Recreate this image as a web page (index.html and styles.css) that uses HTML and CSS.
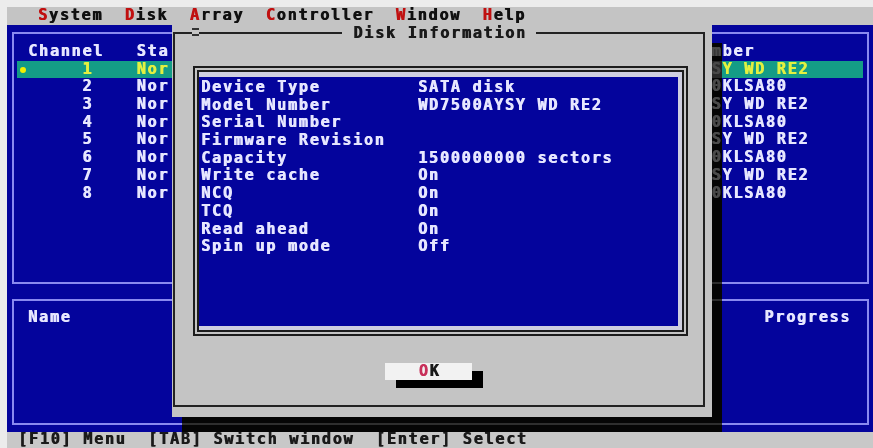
FILE: index.html
```html
<!DOCTYPE html>
<html>
<head>
<meta charset="utf-8">
<title>Disk Information</title>
<link rel="stylesheet" href="styles.css">
</head>
<body>
<div class="screen">
  <div class="menubar"><span class="hk">S</span>ystem  <span class="hk">D</span>isk  <span class="hk">A</span>rray  <span class="hk">C</span>ontroller  <span class="hk">W</span>indow  <span class="hk">H</span>elp</div>
  <div class="main">
    <div class="panel panel-top">
      <div class="row head"><span>Channel</span><span>Sta</span><span>mber</span></div>
      <div class="row sel"><span class="dot"></span><span class="num">1</span><span>Nor</span><span>SY WD RE2</span></div>
      <div class="row"><span class="num">2</span><span>Nor</span><span>0KLSA80</span></div>
      <div class="row"><span class="num">3</span><span>Nor</span><span>SY WD RE2</span></div>
      <div class="row"><span class="num">4</span><span>Nor</span><span>0KLSA80</span></div>
      <div class="row"><span class="num">5</span><span>Nor</span><span>SY WD RE2</span></div>
      <div class="row"><span class="num">6</span><span>Nor</span><span>0KLSA80</span></div>
      <div class="row"><span class="num">7</span><span>Nor</span><span>SY WD RE2</span></div>
      <div class="row"><span class="num">8</span><span>Nor</span><span>0KLSA80</span></div>
    </div>
    <div class="panel panel-bottom">
      <span>Name</span><span>Progress</span>
    </div>
  </div>
  <div class="status">[F10] Menu  [TAB] Switch window  [Enter] Select</div>

  <div class="shadow"></div>

  <div class="dialog">
    <div class="frame">
      <span class="sysmenu"></span>
      <div class="title"><span>Disk Information</span></div>
      <div class="box-outer">
        <div class="box-inner">
          <div class="info">
            <div class="info-row"><span>Device Type</span><span>SATA disk</span></div>
            <div class="info-row"><span>Model Number</span><span>WD7500AYSY WD RE2</span></div>
            <div class="info-row"><span>Serial Number</span><span></span></div>
            <div class="info-row"><span>Firmware Revision</span><span></span></div>
            <div class="info-row"><span>Capacity</span><span>1500000000 sectors</span></div>
            <div class="info-row"><span>Write cache</span><span>On</span></div>
            <div class="info-row"><span>NCQ</span><span>On</span></div>
            <div class="info-row"><span>TCQ</span><span>On</span></div>
            <div class="info-row"><span>Read ahead</span><span>On</span></div>
            <div class="info-row"><span>Spin up mode</span><span>Off</span></div>
          </div>
        </div>
      </div>
      <div class="ok"><span class="ok-hk">O</span>K</div>
    </div>
  </div>
</div>
</body>
</html>
```

FILE: styles.css
```css
* { box-sizing: border-box; }
:root { --cw: 10.85px; }
html, body { margin: 0; padding: 0; }
body {
  background: #ececec;
  width: 873px;
  height: 448px;
  overflow: hidden;
  padding: 7px 0 0 7px;
  font-family: "DejaVu Sans Mono", "Liberation Mono", monospace;
  font-weight: bold;
  font-size: 15.2px;
  letter-spacing: 1.7px;
  text-shadow: 0.7px 0 0 currentColor;
}
.screen {
  position: relative;
  width: 866px;
  height: 441px;
}
.menubar {
  height: 18px;
  background: #c4c4c4;
  color: #101010;
  line-height: 17px;
  padding-left: 31px;
  white-space: pre;
}
.hk { color: #c01010; }

.main {
  height: 407px;
  background: #04049c;
  padding: 7px 4px 7px 5px;
  display: flex;
  flex-direction: column;
  gap: 15px;
}
.panel { border: 2px solid #8a8af0; }
.panel-top {
  height: 252px;
  padding-top: 9px;
}
.panel-bottom {
  height: 126px;
  padding: 8px 16px 0 14px;
  display: flex;
  justify-content: space-between;
  align-items: flex-start;
  line-height: 17.7px;
  color: #e6e6ff;
}
.row {
  position: relative;
  display: grid;
  grid-template-columns: calc(var(--cw) * 10) calc(var(--cw) * 53) 1fr;
  height: 17.7px;
  line-height: 17.7px;
  margin: 0 4px 0 3px;
  padding-left: 11px;
  color: #e6e6ff;
  white-space: pre;
}
.row.sel {
  background: #149c86;
  color: #e4f040;
}
.num { padding-left: calc(var(--cw) * 5); }
.dot {
  position: absolute;
  left: 3px;
  top: 6px;
  width: 6px;
  height: 6px;
  border-radius: 50%;
  background: #f4f000;
}

.status {
  height: 16px;
  background: #c8c8c8;
  color: #1a1a1a;
  line-height: 14px;
  padding-left: 11px;
  white-space: pre;
}

.shadow {
  position: absolute;
  left: 175px;
  top: 36px;
  width: 540px;
  height: 389px;
  background: rgba(0, 0, 0, 0.15);
  backdrop-filter: grayscale(1) brightness(0.38);
}

.dialog {
  position: absolute;
  left: 165px;
  top: 18px;
  width: 540px;
  height: 392px;
  background: #c4c4c4;
  padding: 7px 0 0 1px;
}
.frame {
  position: relative;
  width: 532px;
  height: 375px;
  border: 2px solid #222;
  padding: 32px 0 0 18px;
}
.title {
  position: absolute;
  top: -9px;
  left: 0;
  right: 0;
  text-align: center;
  line-height: 16px;
  color: #1a1a1a;
}
.title span {
  background: #c4c4c4;
  padding: 0 9px 0 11px;
}
.sysmenu {
  position: absolute;
  left: 17px;
  top: -6px;
  width: 7px;
  height: 8px;
  border-top: 2px solid #333;
  border-bottom: 2px solid #333;
  background: #c4c4c4;
}
.box-outer {
  width: 495px;
  border: 2px solid #1c1c1c;
  padding: 2px;
}
.box-inner {
  border: 2px solid #1c1c1c;
  background: #cfcfe0;
  padding: 5px 4px 4px 0;
}
.info {
  height: 249px;
  background: #04049c;
  color: #e6e6ff;
  padding: 2px 0 0 2px;
}
.info-row {
  display: grid;
  grid-template-columns: calc(var(--cw) * 20) 1fr;
  height: 17.7px;
  line-height: 17.7px;
  white-space: pre;
}
.ok {
  margin: 27px 0 0 192px;
  width: 87px;
  height: 17px;
  background: #f2f2f2;
  box-shadow: 11px 8px 0 #000;
  text-align: center;
  line-height: 17px;
  color: #1a1a1a;
  padding-left: 2px;
}
.ok-hk { color: #c8305a; }
```
